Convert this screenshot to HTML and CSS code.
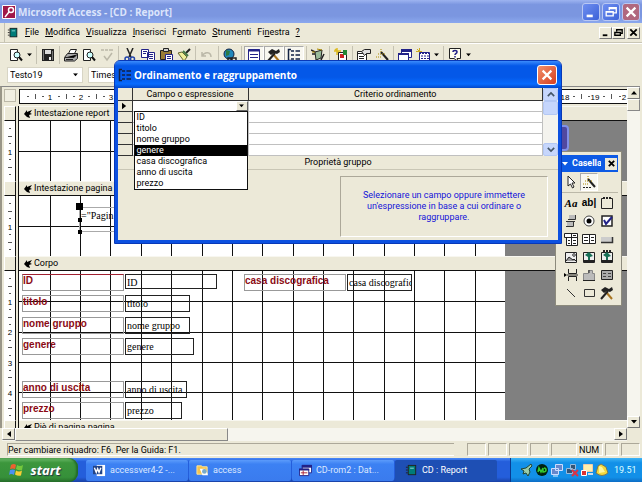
FILE: index.html
```html
<!DOCTYPE html>
<html lang="it">
<head>
<meta charset="utf-8">
<title>Microsoft Access - [CD : Report]</title>
<link rel="stylesheet" href="styles.css">
</head>
<body>
<svg class="defs" aria-hidden="true">
  <symbol id="grid" viewBox="0 0 487 152"><path class="line" d="M31.5 0V152M61.5 0V152M91.5 0V152M122.5 0V152M152.5 0V152M183.5 0V152M213.5 0V152M243.5 0V152M274.5 0V152M304.5 0V152M334.5 0V152M365.5 0V152M395.5 0V152M425.5 0V152M456.5 0V152M486.5 0V152M0 30.5H487M0 61.5H487M0 91.5H487M0 121.5H487"/></symbol>
  <symbol id="report" viewBox="0 0 14 14"><path fill="#222" d="M3 1h9v11h-9z"/><path fill="#007c78" d="M4 2h7v9H4z"/><path stroke="#9dd" d="M5.500 4.500h4"/><path stroke="#222" d="M1 3.500h2M1 6.500h2M1 9.500h2"/></symbol>
  <symbol id="arrow" viewBox="0 0 8 8"><path d="M0 4L3 0V2L8 0L6 3L8 4L5 5L6 8L3 7z"/></symbol>
  <symbol id="down" viewBox="0 0 6 4"><path d="M0 0h6L3 3.500z"/></symbol>
  <symbol id="list" viewBox="0 0 14 14"><path fill="none" stroke="#124" stroke-width="1.500" d="M4 1.500H1.500V12.500H4"/><path stroke="#124" stroke-width="1.500" d="M4 3h3M4 7h3M4 11h3M8.500 3H13M8.500 7H13M8.500 11H13"/></symbol>
  <symbol id="page" viewBox="0 0 14 14"><path fill="#fff" stroke="#222" d="M1.500 1.500H8.500V12.500H1.500z"/><circle cx="8" cy="7" r="3" fill="#cff" stroke="#222"/><path stroke="#111" stroke-width="2" d="M10 9l3 3.500"/></symbol>
  <symbol id="tools" viewBox="0 0 14 14"><path stroke="#a87420" stroke-width="2" d="M6 6l6 7"/><path stroke="#222" stroke-width="2" d="M1 13L8 5"/><path fill="#222" d="M1 4L5 1l4 2 3-2 1 3-3 2-3-1-3 2z"/></symbol>
  <symbol id="wand" viewBox="0 0 14 14"><path stroke="#222" stroke-width="2" d="M6 4l7 8"/><path stroke="#a80" stroke-dasharray="1 1" d="M3 6h8M6 1v4M1 9h5"/><path stroke="#222" stroke-dasharray="2 1" d="M1 12.500h8"/></symbol>
  <symbol id="window" viewBox="0 0 14 14"><path fill="#fff" stroke="#228" d="M3.500 1.500h10v8h-10z"/><path fill="#228" d="M3 1h11v3H3z"/><path fill="#fff" stroke="#228" d="M.5 5.500h10v7H.5z"/><path fill="#228" d="M0 5h11v2H0z"/></symbol>
  <symbol id="photo" viewBox="0 0 14 14"><path fill="#eee" stroke="#222" d="M1.500 2.500h11v10h-11z"/><circle cx="10" cy="5" r="1.300" fill="none" stroke="#333"/><path fill="#999" stroke="#222" d="M2 11L5 7l4 3 1-1 2 2"/></symbol>
  <symbol id="tree" viewBox="0 0 14 14"><path fill="#eee" stroke="#222" d="M1.500 2.500h11v10h-11z"/><path fill="#177057" d="M3 5l4-3 4 4-3 1v5H6V7z"/><path stroke="#222" stroke-width="2" d="M2 11h10"/></symbol>
</svg>

<header class="titlebar">
  <svg class="i14" viewBox="0 0 14 14"><path fill="#a01848" stroke="#fff" d="M.5.5h13v13H.5z"/><circle cx="9" cy="5" r="2.500" fill="none" stroke="#fff" stroke-width="1.500"/><path stroke="#fff" stroke-width="1.500" d="M7 7l-4 5"/></svg>
  <h1>Microsoft Access - [CD : Report]</h1>
  <button class="win" aria-label="Riduci a icona"><svg viewBox="0 0 16 16"><path fill="#fff" d="M3 11h7v3H3z"/></svg></button>
  <button class="win" aria-label="Ripristina"><svg viewBox="0 0 16 16"><path fill="none" stroke="#fff" stroke-width="1.500" d="M6 6V3h8v6h-3M2.500 7.500h8v5h-8zM2 8h9M6 4h8"/></svg></button>
  <button class="win close" aria-label="Chiudi"><svg viewBox="0 0 16 16"><path stroke="#fff" stroke-width="2.500" d="M3 3l10 10M13 3L3 13"/></svg></button>
</header>

<nav class="menubar">
  <svg class="i12" viewBox="0 0 14 14"><use href="#report"/></svg>
  <button><u>F</u>ile</button><button><u>M</u>odifica</button><button><u>V</u>isualizza</button><button><u>I</u>nserisci</button><button>F<u>o</u>rmato</button><button><u>S</u>trumenti</button><button>Fi<u>n</u>estra</button><button><u>?</u></button>
  <span class="mdi">
    <button aria-label="Riduci finestra"><svg viewBox="0 0 12 12"><path d="M3 8h5v2H3z"/></svg></button>
    <button aria-label="Ripristina finestra"><svg viewBox="0 0 12 12"><path fill="none" stroke="#000" stroke-width="1.500" d="M4 5V3h6v4H8M2 6h6v3H2z"/></svg></button>
    <button class="apart" aria-label="Chiudi finestra"><svg viewBox="0 0 12 12"><path stroke="#000" stroke-width="2" d="M2.500 2.500l7 7M9.500 2.500l-7 7"/></svg></button>
  </span>
</nav>

<div class="toolbar">
  <button aria-label="Visualizza"><svg viewBox="0 0 14 14"><use href="#page"/></svg></button>
  <button class="tiny" aria-label="Altre visualizzazioni"><svg viewBox="0 0 6 4"><use href="#down"/></svg></button><i></i>
  <button aria-label="Salva"><svg viewBox="0 0 14 14"><path fill="#222" d="M1 1h12v12H1z"/><path fill="#ddd" d="M4 2h6v4H4z"/><path fill="#777" d="M2 2h1v10H2zM11 3h1v9h-1z"/><path fill="#eee" d="M8 9h2v3H8z"/></svg></button><i></i>
  <button aria-label="Stampa"><svg viewBox="0 0 14 14"><path fill="#fff" stroke="#222" d="M4.500 5.500l2-4h6l-2 4"/><path fill="#aaa" stroke="#222" d="M.5 9.500l3-4h10v5l-3 2.500H.5z"/><path stroke="#222" d="M1 9.500h9l3-3M2 11.500h7"/></svg></button>
  <button aria-label="Anteprima"><svg viewBox="0 0 14 14"><use href="#page"/></svg></button>
  <button aria-label="Controllo ortografia"><svg viewBox="0 0 14 14"><path fill="none" stroke="#bbb8a8" stroke-width="1.500" d="M1 2h3M5 2h3M9 2h4M4 8l3 4 5-7"/></svg></button><i></i>
  <button aria-label="Taglia"><svg viewBox="0 0 14 14"><path stroke="#222" stroke-width="1.500" d="M4 0l4 9M10 0L6 9"/><circle cx="4" cy="11" r="2" fill="none" stroke="#24a" stroke-width="1.500"/><circle cx="9.500" cy="11" r="2" fill="none" stroke="#24a" stroke-width="1.500"/></svg></button>
  <button aria-label="Copia"><svg viewBox="0 0 14 14"><path fill="#fff" stroke="#228" d="M.5 1.500h7v8h-7zM6.500 4.500h7v8h-7z"/><path stroke="#228" d="M2 3.500h4M2 5.500h3M8 6.500h4M8 8.500h4M8 10.500h4"/></svg></button>
  <button aria-label="Incolla"><svg viewBox="0 0 14 14"><path fill="#9a7c35" stroke="#222" d="M1.500 2.500h11v9h-11z"/><path fill="#ccc" stroke="#222" d="M4.500.5h5v3h-5z"/><path fill="#fff" stroke="#228" d="M6.500 6.500h7v7h-7z"/><path stroke="#228" d="M8 8.500h4M8 10.500h4"/></svg></button>
  <button aria-label="Copia formato"><svg viewBox="0 0 14 14"><path stroke="#222" stroke-width="2" d="M13 1L9 5"/><path fill="#ee9" stroke="#663" d="M1 5l4-1 5 5-3 4z"/><path stroke="#474" stroke-width="2" d="M6 3l5 5"/></svg></button><i></i>
  <button aria-label="Annulla"><svg viewBox="0 0 14 14"><path fill="none" stroke="#bbb8a8" stroke-width="1.500" d="M2 4v4h4M2 8c3-5 9-4 9 1"/></svg></button><i></i>
  <button aria-label="Collegamento ipertestuale"><svg viewBox="0 0 14 14"><circle cx="6" cy="6" r="5" fill="#28b" stroke="#124"/><path fill="#2a7a45" d="M3 2l4 1-1 4-3 1z"/><path fill="none" stroke="#222" stroke-width="1.500" d="M5 10h3v3H5zM9 10h4v3H9z"/></svg></button><i></i>
  <button class="on" aria-label="Elenco campi"><svg viewBox="0 0 14 14"><path fill="#fff" stroke="#228" d="M1.500 1.500h11v11h-11z"/><path stroke="#228" stroke-width="2" d="M1 2.500h12"/><path stroke="#228" d="M3 6.500h8M3 9.500h8"/></svg></button>
  <button class="on" aria-label="Casella degli strumenti"><svg viewBox="0 0 14 14"><use href="#tools"/></svg></button>
  <button class="on" aria-label="Ordinamento e raggruppamento"><svg viewBox="0 0 14 14"><use href="#list"/></svg></button><i></i>
  <button aria-label="Formattazione automatica"><svg viewBox="0 0 14 14"><path fill="#9b9" stroke="#222" d="M4 4l7-2-1 8-5 2z"/><path stroke="#222" stroke-width="1.500" d="M0 2l4 2M1 6h3M10 12l3-6"/><path stroke="#a80" d="M1 4h3M6 1l5 1"/></svg></button><i></i>
  <button aria-label="Codice"><svg viewBox="0 0 14 14"><path stroke="#db2" stroke-width="1.500" d="M0 3h7M3 0v7M1 1l5 5"/><path fill="#fff" stroke="#222" d="M4.500 4.500h8v8h-8z"/><path fill="#c22" d="M6 6h4v4H6z"/><path fill="#283" d="M9 2h4v5H9z"/></svg></button><i></i>
  <button aria-label="Proprietà"><svg viewBox="0 0 14 14"><path fill="#fff" stroke="#222" d="M.5 3.500h9v9h-9z"/><path stroke="#222" d="M1 5.500h8M2 8.500h5M2 10.500h5"/><path fill="#ddd" stroke="#222" d="M4.500 3.500l3-2h6v4h-4l-2 2z"/></svg></button>
  <button aria-label="Genera"><svg viewBox="0 0 14 14"><use href="#wand"/></svg></button><i></i>
  <button aria-label="Finestra del database"><svg viewBox="0 0 14 14"><use href="#window"/></svg></button>
  <button aria-label="Nuovo oggetto"><svg viewBox="0 0 14 14"><path stroke="#ca2" d="M0 3.500h6M3.500 0v6M1 1l5 5"/><path fill="#fff" stroke="#228" d="M3.500 4.500h10v8h-10z"/><path stroke="#228" stroke-dasharray="2 1" d="M5 8h8M5 10.500h8M3 5.500h11"/></svg></button>
  <button class="tiny" aria-label="Altri oggetti"><svg viewBox="0 0 6 4"><use href="#down"/></svg></button><i></i>
  <button aria-label="Guida"><svg viewBox="0 0 14 14"><path fill="#ffe" stroke="#222" d="M1.500.5h11v10H9l1 3-4-3H1.500z"/><path fill="none" stroke="#228" stroke-width="1.500" d="M5 4c0-2 4-2 4 0S7 5 7 7M7 8v1.500"/></svg></button>
  <button class="tiny" aria-label="Altri pulsanti"><svg viewBox="0 0 6 4"><use href="#down"/></svg></button>
</div>

<div class="formatbar">
  <label class="combo"><select aria-label="Oggetto"><option>Testo19</option></select><svg viewBox="0 0 6 4"><use href="#down"/></svg></label>
  <label class="combo font"><select aria-label="Tipo di carattere"><option>Times</option></select></label>
</div>

<main class="designer">
  <div class="sheet">
    <div class="row ruler-row">
      <span class="corner"></span>
      <svg class="ruler" aria-hidden="true"><path class="ticks" d="M15.500 4v5M46.500 4v5M76.500 4v5M561.500 4v5M591.500 4v5"/><path class="dots" d="M7 6.500h2M22 6.500h2M38 6.500h2M53 6.500h2M68 6.500h2M83 6.500h2M553 6.500h2M568 6.500h2M583 6.500h2M599 6.500h2"/><text x="30" y="10">1</text><text x="61" y="10">2</text><text x="91" y="10">3</text><text x="545" y="10">18</text><text x="575" y="10">19</text><text x="604" y="10">2</text></svg>
    </div>
    <div class="row band"><span class="selector"></span><h2><svg viewBox="0 0 8 8"><use href="#arrow"/></svg>Intestazione report</h2></div>
    <section class="row short">
      <svg class="vruler" aria-hidden="true"><path class="ticks" d="M4 15.500h4M4 46.500h4"/><path class="dots" d="M5 7.500h2M5 22.500h2M5 38.500h2M5 53.500h2"/><text x="6" y="34">1</text></svg>
      <div class="canvas"><div class="paper"><svg class="gridlines"><use href="#grid" width="487" height="152"/></svg></div></div>
    </section>
    <div class="row band"><span class="selector"></span><h2><svg viewBox="0 0 8 8"><use href="#arrow"/></svg>Intestazione pagina</h2></div>
    <section class="row short">
      <svg class="vruler" aria-hidden="true"><path class="ticks" d="M4 15.500h4M4 46.500h4"/><path class="dots" d="M5 7.500h2M5 22.500h2M5 38.500h2M5 53.500h2"/><text x="6" y="34">1</text></svg>
      <div class="canvas"><div class="paper"><svg class="gridlines"><use href="#grid" width="487" height="152"/></svg>
        <div class="control selected page-no">="Pagin<b></b><b></b><b></b></div></div></div>
    </section>
    <div class="row band"><span class="selector"></span><h2><svg viewBox="0 0 8 8"><use href="#arrow"/></svg>Corpo</h2></div>
    <section class="row tall">
      <svg class="vruler" aria-hidden="true"><path class="ticks" d="M4 15.500h4M4 46.500h4M4 76.500h4M4 106.500h4M4 137.500h4"/><path class="dots" d="M5 7.500h2M5 22.500h2M5 38.500h2M5 53.500h2M5 69.500h2M5 84.500h2M5 99.500h2M5 114.500h2M5 129.500h2M5 144.500h2"/><text x="6" y="34">1</text><text x="6" y="64">2</text><text x="6" y="95">3</text><text x="6" y="125">4</text></svg>
      <div class="canvas"><div class="paper"><svg class="gridlines"><use href="#grid" width="487" height="152"/></svg>
        <div class="tag c1 r1 top">ID</div><div class="control c2 r1 w-id">ID</div>
        <div class="tag c1 r2">titolo</div><div class="control c2 r2 w-ti">titolo</div>
        <div class="tag c1 r3">nome gruppo</div><div class="control c2 r3 w-ti">nome gruppo</div>
        <div class="tag c1 r4">genere</div><div class="control c2 r4 w-ge">genere</div>
        <div class="tag c1 r5">anno di uscita</div><div class="control c2 r5 w-an">anno di uscita</div>
        <div class="tag c1 r6">prezzo</div><div class="control c2 r6 w-pr">prezzo</div>
        <div class="tag c3 r1">casa discografica</div><div class="control c4 r1 w-ti">casa discografica</div>
      </div></div>
    </section>
    <div class="row band last"><span class="selector"></span><h2><svg viewBox="0 0 8 8"><use href="#arrow"/></svg>Piè di pagina pagina</h2></div>
  </div>
  <div class="vscroll"><button class="sb" aria-label="Su"><svg viewBox="0 0 6 4"><path d="M0 3.500h6L3 0z"/></svg></button><span class="thumb"></span><button class="sb end" aria-label="Giù"><svg viewBox="0 0 6 4"><use href="#down"/></svg></button></div>
</main>
<div class="hscroll"><button class="sb" aria-label="Sinistra"><svg viewBox="0 0 6 6"><path d="M5 0v6L1 3z"/></svg></button><span class="thumb"></span><button class="sb end" aria-label="Destra"><svg viewBox="0 0 6 6"><path d="M1 0v6l4-3z"/></svg></button></div>

<footer class="status"><span class="msg">Per cambiare riquadro: F6. Per la Guida: F1.</span><span class="p"></span><span class="p"></span><span class="p"></span><span class="p"></span><span class="p wide"></span><span class="p num">NUM</span><span class="p small"></span><span class="p"></span></footer>

<div class="taskbar">
  <button class="start"><svg viewBox="0 0 16 16"><path fill="#ee6030" d="M2 3q3-2 5 0L6 7Q4 6 1 7z"/><path fill="#75c83c" d="M8 3q3 2 6 0l-1 5q-3 1-6-1z"/><path fill="#4b90f2" d="M1 8q3-1 5 0l-1 5q-3-2-5 0z"/><path fill="#f8ce35" d="M7 8.500q3 2 6 0l-1 5q-3 1-6-1z"/></svg>start</button>
  <button class="task"><svg viewBox="0 0 14 14"><path fill="#fff" d="M4 1h9v12H4z"/><path fill="#248" d="M0 2h10v9H0z"/><path fill="none" stroke="#fff" stroke-width="1.500" d="M1.500 4l2 5L5 5l1.500 4 2-5"/></svg><span>accessver4-2 -...</span></button>
  <button class="task"><svg viewBox="0 0 14 14"><path fill="#f4c34d" stroke="#ffe9a0" d="M1 2h5l1 1h5v8H1z"/><path fill="#fff" d="M4 5h6l3 7H7z"/><circle cx="9" cy="8" r="2.500" fill="#7ac" /></svg><span>access</span></button>
  <button class="task"><svg viewBox="0 0 14 14"><use href="#window"/><path stroke="#a23" d="M2 9.500h7M4.500 7v5"/></svg><span>CD-rom2 : Dat...</span></button>
  <button class="task active"><svg viewBox="0 0 14 14"><use href="#report"/></svg><span>CD : Report</span></button>
  <div class="tray">
    <svg viewBox="0 0 14 14"><path fill="#9ca" stroke="#243" d="M1 6l5-1 5-4 1 2-3 3 1 3-2 4-2-3-3 1 1-3z"/></svg>
    <svg viewBox="0 0 14 14"><circle cx="7" cy="7" r="6" fill="#021"/><path fill="none" stroke="#3c3" stroke-width="1.500" d="M3 9l1-4 2 4 2-4v4q3 0 3-2t-2-2"/></svg>
    <svg viewBox="0 0 14 14"><path fill="#68c" stroke="#cdf" d="M5.500 1.500h7v6h-7zM1.500 5.500h7v6h-7z"/><path stroke="#def" d="M3 13h5"/></svg>
    <svg viewBox="0 0 14 14"><path fill="#357" stroke="#9bd" d="M5.500 1.500h5v5h-5zM1.500 5.500h6v5h-6z"/><path stroke="#d34" stroke-width="2" d="M7 7l6 6M13 7l-6 6"/></svg>
    <svg viewBox="0 0 14 14"><path fill="#ffefad" stroke="#eca" d="M3.500 1.500h9v7h-9z"/><path fill="#d33" stroke="#fff" d="M1.500 7.500h5v5h-5z"/><path stroke="#cde" stroke-width="2" d="M8 11h5"/></svg>
    <svg viewBox="0 0 14 14"><path fill="#f4d83c" stroke="#775" d="M1 10q6 5 12 0L11 4 6 1 3 3z"/><path fill="#fff59a" d="M4 3l3 1 3 5-6 1z"/></svg>
    <time>19.51</time>
  </div>
</div>

<aside class="toolbox" aria-label="Casella degli strumenti">
  <header><svg viewBox="0 0 6 4"><use href="#down"/></svg><strong>Casella</strong><button aria-label="Chiudi casella"><svg viewBox="0 0 10 10"><path stroke="#000" stroke-width="2" d="M2 2l6 6M8 2L2 8"/></svg></button></header>
  <div class="tools first">
    <button aria-label="Seleziona oggetti"><svg viewBox="0 0 14 14"><path fill="#fff" stroke="#222" d="M4 1v10l2.500-2 2 4 1.500-1-2-4H11z"/></svg></button>
    <button class="on" aria-label="Creazioni guidate"><svg viewBox="0 0 14 14"><use href="#wand"/></svg></button>
  </div>
  <div class="tools">
    <button class="aa" aria-label="Etichetta">Aa</button><button class="ab" aria-label="Casella di testo">ab|</button>
    <button aria-label="Gruppo di opzioni"><svg viewBox="0 0 14 14"><path fill="none" stroke="#222" d="M3 2.500H1.500v10h11v-10H11"/><path stroke="#222" stroke-width="2" stroke-dasharray="2 1" d="M3 2h8"/></svg></button>
    <button aria-label="Interruttore"><svg viewBox="0 0 14 14"><path fill="#bbb" d="M5 1h6v4H5zM3 8h6v4H3z"/><path fill="none" stroke="#333" d="M4 5.500h7.500V1M2 12.500h7.500V8M2 7.500h9"/></svg></button>
    <button aria-label="Pulsante di opzione"><svg viewBox="0 0 14 14"><circle cx="7" cy="7" r="5" fill="#fff" stroke="#444"/><circle cx="7" cy="7" r="2.500"/></svg></button>
    <button aria-label="Casella di controllo"><svg viewBox="0 0 14 14"><path fill="#fff" stroke="#222" stroke-width="1.500" d="M2 2h10v10H2z"/><path fill="none" stroke="#228" stroke-width="2" d="M4 6l2 4 6-7"/></svg></button>
    <button aria-label="Casella combinata"><svg viewBox="0 0 14 14"><path fill="#fff" stroke="#222" d="M.5 1.500h13v4H.5zM2.500 5.500h11v8h-11zM7.500 1.500v12"/><path stroke="#222" d="M4 8.500h2M9 8.500h3M4 11.500h2M9 11.500h3M9 3.500h3"/></svg></button>
    <button aria-label="Casella di riepilogo"><svg viewBox="0 0 14 14"><path fill="#fff" stroke="#222" d="M.5 2.500h13v9H.5zM7.500 2.500v9"/><path stroke="#222" d="M2 5.500h4M2 8.500h4M9 5.500h3M9 8.500h3"/></svg></button>
    <button aria-label="Pulsante di comando"><svg viewBox="0 0 14 14"><path fill="#ccc" d="M1 5h11v5H1z"/><path fill="none" stroke="#333" stroke-width="1.500" d="M1 10.500h11.500V5"/></svg></button>
    <button aria-label="Immagine"><svg viewBox="0 0 14 14"><use href="#photo"/></svg></button>
    <button aria-label="Cornice oggetto non associato"><svg viewBox="0 0 14 14"><use href="#tree"/></svg></button>
    <button aria-label="Cornice oggetto associato"><svg viewBox="0 0 14 14"><use href="#tree"/><path stroke="#222" stroke-width="2" stroke-dasharray="2 1" d="M3 1h9"/></svg></button>
    <button aria-label="Interruzione di pagina"><svg viewBox="0 0 14 14"><path fill="none" stroke="#222" d="M4.500 1v4.500h8V1M4.500 13V8.500h8V13M3 7h11"/><path d="M0 5l3 2-3 2z"/></svg></button>
    <button aria-label="Struttura a schede"><svg viewBox="0 0 14 14"><path fill="#bbb" stroke="#888" d="M1.500 5.500h5v-3h4v3h2v7h-11z"/><path stroke="#222" d="M1 12.500h12M7 2v3"/></svg></button>
    <button aria-label="Sottomaschera"><svg viewBox="0 0 14 14"><path fill="#aaa" stroke="#222" d="M1.500 2.500h11v9h-11z"/><path stroke="#444" d="M3 5.500h3M8 5.500h3M3 8.500h3M8 8.500h3"/></svg></button>
    <button aria-label="Linea"><svg viewBox="0 0 14 14"><path stroke="#333" d="M3 3l8 8"/></svg></button>
    <button aria-label="Rettangolo"><svg viewBox="0 0 14 14"><path fill="none" stroke="#333" d="M2.500 3.500h10v7h-10z"/></svg></button>
    <button aria-label="Altri controlli"><svg viewBox="0 0 14 14"><use href="#tools"/></svg></button>
  </div>
</aside>

<span class="ghost"></span>

<div class="dialog" role="dialog" aria-labelledby="dlg-title">
  <header><svg class="i14" viewBox="0 0 14 14"><use href="#list"/></svg><h2 id="dlg-title">Ordinamento e raggruppamento</h2><button class="win close" aria-label="Chiudi finestra di dialogo"><svg viewBox="0 0 16 16"><path stroke="#fff" stroke-width="2.500" d="M3 3l10 10M13 3L3 13"/></svg></button></header>
  <div class="dlg-grid">
    <table>
      <colgroup><col class="sel"><col class="fld"><col></colgroup>
      <thead><tr><th></th><th>Campo o espressione</th><th>Criterio ordinamento</th></tr></thead>
      <tbody>
        <tr><th><svg viewBox="0 0 6 8"><path d="M0 0v8l5-4z"/></svg></th><td class="edit"><div><input type="text" aria-label="Campo o espressione"><button aria-label="Apri elenco"><svg viewBox="0 0 6 4"><use href="#down"/></svg></button></div>
          <ul role="listbox"><li role="option">ID</li><li role="option">titolo</li><li role="option">nome gruppo</li><li role="option" aria-selected="true">genere</li><li role="option">casa discografica</li><li role="option">anno di uscita</li><li role="option">prezzo</li></ul></td><td></td></tr>
        <tr><th></th><td></td><td></td></tr><tr><th></th><td></td><td></td></tr><tr><th></th><td></td><td></td></tr><tr><th></th><td></td><td></td></tr>
      </tbody>
    </table>
    <div class="xp-scroll"><button aria-label="Scorri su"><svg viewBox="0 0 10 8"><path d="M1 6l4-4 4 4"/></svg></button><span></span><button class="end" aria-label="Scorri giù"><svg viewBox="0 0 10 8"><path d="M1 2l4 4 4-4"/></svg></button></div>
  </div>
  <h3>Proprietà gruppo</h3>
  <div class="props"><p>Selezionare un campo oppure immettere un'espressione in base a cui ordinare o raggruppare.</p></div>
</div>
</body>
</html>
```
FILE: styles.css
```css
* { box-sizing: border-box; }
html, body { height: 100%; }
body {
  margin: 0; display: flex; flex-direction: column; position: relative; overflow: hidden;
  background: #ece9d8; color: #000;
  font: 9px/11px Roboto, "Liberation Sans", sans-serif;
}
h1, h2, h3, p, ul { margin: 0; padding: 0; font: inherit; }
button { margin: 0; padding: 0; border: 0; background: none; color: inherit; font: inherit; display: flex; align-items: center; justify-content: center; }
svg { display: block; flex: none; }
.defs { position: absolute; width: 0; height: 0; }
.i14 { width: 14px; height: 14px; }
.i12 { width: 12px; height: 12px; }
.line { stroke: #111; fill: none; }

/* Application title */
.titlebar { height: 23px; flex: none; display: flex; align-items: center; gap: 2px; padding: 0 2px; background: linear-gradient(#9db4f0, #7b96e0 20%, #7b96e0 70%, #8ba8ee); }
.titlebar h1 { flex: 1; color: #dbe4fb; font: bold 10px/16px "Open Sans", sans-serif; }
.win { width: 18px; height: 18px; border: 1px solid #b9c8f4; border-radius: 3px; background: linear-gradient(135deg, #6f8ff0, #3c62d8); }
.win svg { width: 14px; height: 14px; }
.titlebar .close { background: #b0687f; }

.menubar { height: 20px; flex: none; display: flex; align-items: center; border-bottom: 1px solid #c9c6b5; padding: 0 2px 0 7px; box-shadow: inset 4px 0 #ece9d8, inset 5px 0 #c5c2b2; }
.menubar > button { margin-right: 6px; }
.menubar > svg { margin-right: 6px; }
.mdi { margin-left: auto; display: flex; }
.mdi button, .sb { width: 13px; height: 12px; background: #ece9d8; border: 1px solid; border-color: #fff #777 #777 #fff; }
.mdi .apart { margin-left: 2px; }
.mdi svg { width: 11px; height: 11px; }

.toolbar { height: 22px; flex: none; display: flex; align-items: center; padding-left: 7px; border-top: 1px solid #fff; }
.toolbar button { width: 18px; height: 18px; }
.toolbar button svg { width: 14px; height: 14px; }
.toolbar .on { width: 20px; }
.toolbar .tiny { width: 9px; }
.toolbar .tiny svg { width: 5px; height: 4px; }
.toolbar i { width: 1px; height: 18px; margin: 0 2px; background: #c5c2b2; }
.on { background: #f8f7f0; border: 1px solid; border-color: #aaa #fff #fff #aaa; }
.formatbar { height: 21px; flex: none; display: flex; gap: 5px; padding: 2px 7px; }
.combo { width: 76px; height: 16px; display: flex; align-items: center; background: #fff; border: 1px solid #d8d5c5; padding-right: 4px; }
.combo select { appearance: none; flex: 1; min-width: 0; border: 0; background: none; padding: 0 2px; font: inherit; color: inherit; }
.combo svg { width: 5px; height: 4px; }

/* Report design surface */
.designer { flex: 1; min-height: 0; display: flex; border-top: 1px solid #888; border-left: 2px solid #999688; margin-right: 2px; }
.sheet { flex: 1; min-width: 0; overflow: hidden; padding: 2px 0 0 2px; }
.row { display: flex; gap: 3px; }
.corner { width: 12px; height: 13px; border: 1px solid #bbb8a8; background: #f1efe2; }
.ruler-row { margin-bottom: 2px; }
.ruler { flex: 1; min-width: 0; height: 15px; border: solid #111; border-width: 1px 0 1px 1px; background: #fff; }
.ruler text, .vruler text { font: 8px "Liberation Sans", sans-serif; text-anchor: middle; }
.ticks, .dots { stroke: #555; }
.selector { width: 12px; border: 1px solid; border-color: #fff #111 #111 #fff; }
.band { height: 15px; }
.band h2 { flex: 1; min-width: 0; display: flex; align-items: center; gap: 2px; padding-left: 5px; border-bottom: 1px solid #111; border-top: 1px solid #f8f7f0; box-shadow: -1px 0 #111; }
.band svg { width: 8px; height: 8px; }
.vruler { width: 12px; height: 100%; background: #fff; border-right: 1px solid #111; }
.canvas { flex: 1; min-width: 0; background: #808080; box-shadow: -1px 0 #111; }
.paper { position: relative; width: 80%; height: 100%; background: #fff; overflow: hidden; }
.short { height: 60px; }
.tall { height: 149px; }
.gridlines { width: 487px; height: 152px; }
.tag, .control { position: absolute; height: 17px; white-space: nowrap; overflow: hidden; }
.tag { width: 102px; border: 1px solid #999; color: #8b0a14; font: bold 10px/12px "Liberation Sans", sans-serif; }
.tag.top { border-top-color: #a02030; }
.control { padding: 0 1px; border: 1px solid #222; font: 10px/15px "Liberation Serif", serif; }
.c1 { left: 3px; } .c2 { left: 106px; } .c3 { left: 225px; } .c4 { left: 328px; }
.r1 { top: 3px; } .r2 { top: 24px; } .r3 { top: 46px; } .r4 { top: 67px; } .r5 { top: 110px; } .r6 { top: 131px; }
.w-id { width: 92px; height: 15px; } .w-ti { width: 65px; } .w-ge { width: 69px; } .w-an { width: 62px; } .w-pr { width: 57px; }
.page-no { left: 60px; top: 11px; width: 90px; height: 25px; overflow: visible; border-color: #aaa; }
.page-no b { position: absolute; left: -2px; top: 10px; width: 4px; height: 4px; background: #000; }
.page-no b:first-of-type { left: -4px; top: -5px; width: 7px; height: 7px; }
.page-no b:last-of-type { top: 22px; }
.vscroll { width: 13px; display: flex; flex-direction: column; background: #f6f5ee; }
.sb svg { width: 6px; height: 6px; }
.thumb { background: #ece9d8; border: 1px solid; border-color: #fff #888 #888 #fff; }
.vscroll .thumb { height: 12px; }
.end { margin-top: auto; }
.hscroll { height: 13px; flex: none; display: flex; background: #f6f5ee; margin: 0 15px 0 2px; }
.hscroll .thumb { width: 34%; }
.hscroll .end { margin: 0 0 0 auto; }

.status { height: 17px; flex: none; display: flex; gap: 2px; padding: 2px 2px 2px 7px; }
.status span { border: 1px solid; border-color: #aca899 #fff #fff #aca899; line-height: 12px; }
.status .msg { flex: 1; border-right: 0; margin-right: 11px; }
.status .p { width: 19px; }
.status .wide { width: 26px; }
.status .num { width: 24px; border-left: 0; }
.status .small { width: 14px; }

.taskbar { height: 24px; flex: none; display: flex; align-items: stretch; color: #fff; background: linear-gradient(#4a8af8, #245edb 15%, #245edb 80%, #1941a5); }
.start { width: 78px; margin-right: 8px; gap: 5px; padding-right: 8px; border-radius: 0 9px 9px 0; background: linear-gradient(#6cba6a, #3c963c 20%, #36903a 80%, #276e2a); box-shadow: inset -2px 0 2px #226a26; font: italic bold 13px/20px "Open Sans", sans-serif; text-shadow: 1px 1px 1px #234; }
.start svg { width: 16px; height: 16px; }
.task { flex: 0 1 102px; min-width: 0; margin: 2px 1px 1px 0; gap: 4px; padding-left: 7px; justify-content: flex-start; border-radius: 2px; background: linear-gradient(#5b9bfb, #3c81f3 20%, #3a7bee); color: #dbe8ff; }
.task svg { width: 13px; height: 13px; }
.task span { white-space: nowrap; }
.task.active { background: #1e4fb4; padding-left: 10px; color: #fff; }
.tray { margin-left: auto; width: 132px; display: flex; align-items: center; gap: 1px; padding-left: 9px; background: linear-gradient(#3fb4f6, #1290e8 20%, #1290e8 80%, #0d6cc4); border-left: 1px solid #0a3a90; }
.tray svg { width: 14px; height: 14px; }
.tray time { margin-left: 4px; color: #dff; }

/* Floating toolbox */
.toolbox { position: absolute; right: 20px; top: 151px; width: 67px; padding: 3px; background: #ece9d8; border: 1px solid #8c8a7c; }
.toolbox header { height: 17px; display: flex; align-items: center; gap: 4px; padding: 0 1px 0 3px; background: #0d5ae4; color: #fff; }
.toolbox header > svg { width: 6px; height: 4px; fill: #fff; }
.toolbox strong { flex: 1; min-width: 0; overflow: hidden; white-space: nowrap; }
.toolbox header button { width: 12px; height: 12px; background: #ece9d8; }
.toolbox header button svg { width: 9px; height: 9px; }
.tools { display: grid; grid-template-columns: repeat(3, 18px); justify-content: end; padding-right: 2px; }
.tools button { height: 18px; }
.tools svg { width: 14px; height: 14px; }
.tools.first { padding: 1px 2px 1px 0; border-bottom: 1px solid #bbb8a8; margin-bottom: 1px; }
.aa { font: italic bold 11px/12px "Liberation Serif", serif; }
.ab { font: bold 10px/12px "Liberation Sans", sans-serif; }
.ghost { position: absolute; right: 73px; top: 125px; width: 10px; height: 26px; border: 2px solid #8090e8; border-radius: 0 4px 4px 0; background: #5048a0; }

/* Sorting and grouping dialog */
.dialog { position: absolute; left: 114px; right: 80px; top: 60px; padding: 0 3px 3px; background: #ece9d8; border: 1px solid #0838b8; border-radius: 6px 6px 0 0; box-shadow: inset 3px 0 #0c50e0, inset -3px 0 #0c50e0, inset 0 -3px #0c50e0; }
.dialog > header { height: 27px; margin: 0 -3px; padding: 0 4px 0 3px; display: flex; align-items: center; gap: 2px; border-radius: 5px 5px 0 0; background: linear-gradient(#3c8cfc, #0458e8 18%, #0458e8 60%, #066bff 85%, #0348c8); color: #fff; }
.dialog header h2 { flex: 1; font: bold 10px/16px "Open Sans", sans-serif; }
.dialog header .win { width: 20px; height: 20px; border-color: #fff; background: linear-gradient(135deg, #f0906c, #d84020); }
.dlg-grid { display: flex; background: #fff; }
table { flex: 1; border-collapse: collapse; table-layout: fixed; width: 100%; }
.sel { width: 14px; }
.fld { width: 116px; }
th { font-weight: normal; background: #ece9d8; border-right: 1px solid #333; border-bottom: 1px solid #333; }
th, td { padding: 0; height: 11px; }
thead th { height: 12px; line-height: 10px; }
td { border-bottom: 1px solid #c0c0c0; border-right: 1px solid #c0c0c0; }
tbody th svg { width: 5px; height: 8px; margin: 0 auto; }
.edit { position: relative; }
.edit div { display: flex; height: 10px; }
.edit input { flex: 1; min-width: 0; border: 0; padding: 0 2px; background: #fff; font: inherit; }
.edit button { width: 12px; background: #ece9d8; border: 1px solid; border-color: #fff #666 #666 #fff; }
.edit button svg { width: 5px; height: 4px; }
.edit ul { position: absolute; left: 1px; right: 0; top: 10px; z-index: 1; list-style: none; background: #fff; border: 1px solid #111; }
.edit li { padding: 0 2px; line-height: 11px; }
.edit li[aria-selected] { background: #000; color: #fff; }
.xp-scroll { width: 15px; display: flex; flex-direction: column; background: #f4f3ee; }
.xp-scroll button { height: 13px; border: 1px solid #b4c8f4; border-radius: 2px; background: #c6d6fc; }
.xp-scroll svg { width: 8px; height: 7px; fill: none; stroke: #456; stroke-width: 2; }
.xp-scroll span { height: 14px; border: 1px solid #b4c8f4; border-radius: 2px; background: #c6d6fc; }
.dialog h3 { padding: 1px 0; margin: 0 0 6px; text-align: center; border-bottom: 1px solid #c9c6b5; }
.props { width: 208px; margin: 0 10px 3px auto; padding: 13px 20px; border: 1px solid; border-color: #aca899 #fff #fff #aca899; color: #1414d8; text-align: center; }
```
